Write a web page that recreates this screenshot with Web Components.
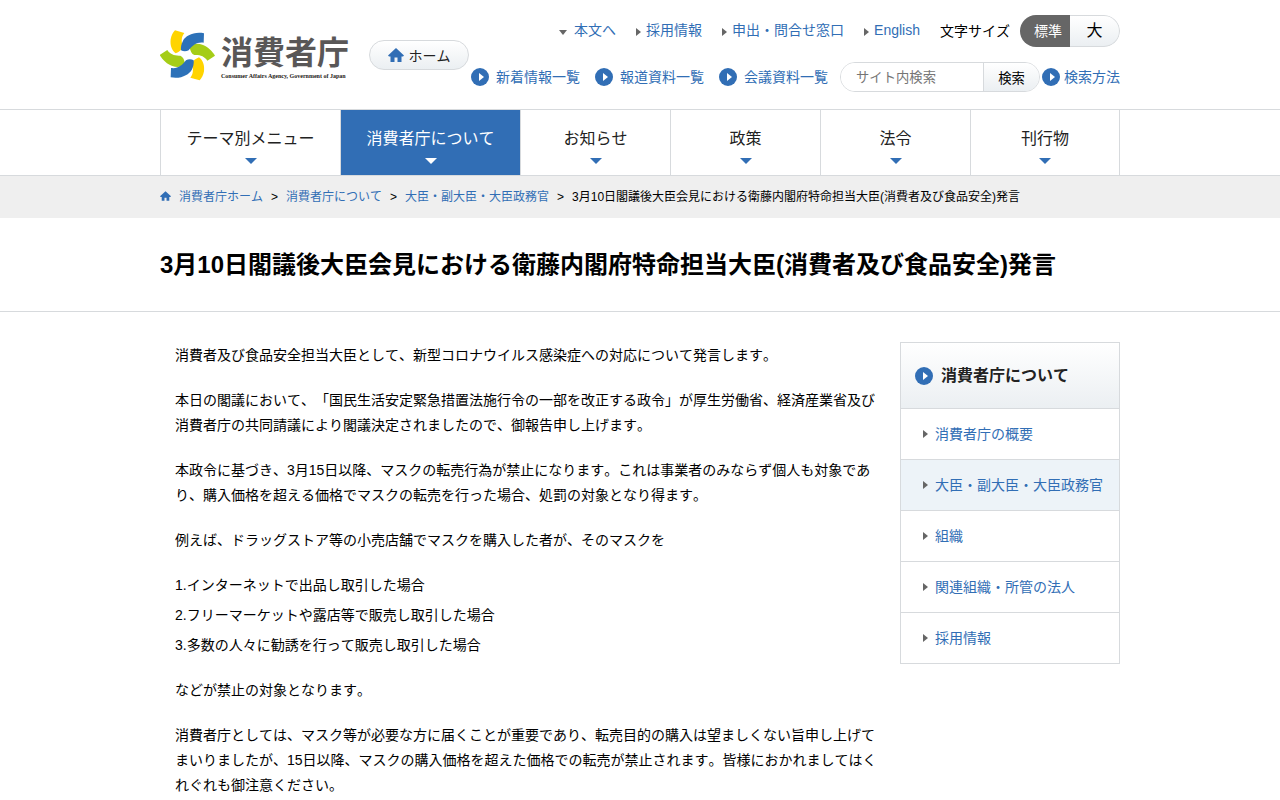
<!DOCTYPE html>
<html lang="ja">
<head>
<meta charset="utf-8">
<meta name="viewport" content="width=device-width, initial-scale=1">
<title>3月10日閣議後大臣会見における衛藤内閣府特命担当大臣(消費者及び食品安全)発言 | 消費者庁</title>
<style>
:root { --blue: #316eb5; --line: #d7dadd; --soft: linear-gradient(#fff, #ebeff2); --dark: #222; --mark: #666; }
body { margin: 0; background: #fff; color: #000; font: 14px/25px "Liberation Sans", "Noto Sans CJK JP", sans-serif; font-kerning: none; text-spacing-trim: space-all; }
</style>
</head>
<body>
<site-header></site-header>
<site-nav></site-nav>
<site-breadcrumb></site-breadcrumb>
<page-title>3月10日閣議後大臣会見における衛藤内閣府特命担当大臣(消費者及び食品安全)発言</page-title>
<page-columns>
  <statement-text></statement-text>
  <side-menu slot="side">
    <span slot="heading">消費者庁について</span>
    <side-item>消費者庁の概要</side-item>
    <side-item current>大臣・副大臣・大臣政務官</side-item>
    <side-item>組織</side-item>
    <side-item>関連組織・所管の法人</side-item>
    <side-item>採用情報</side-item>
  </side-menu>
</page-columns>

<script>
function define(name, html) {
  const template = document.createElement('template');
  template.innerHTML = html;
  customElements.define(name, class extends HTMLElement {
    constructor() {
      super();
      this.attachShadow({ mode: 'open' }).append(template.content.cloneNode(true));
    }
  });
}

const HOME = '<svg viewBox="0 0 32 28" aria-hidden="true"><path fill="#316eb5" d="M16 0 32 15 30 17H27V28H19V19H13V28H5V17H2L0 15Z"/></svg>';

define('play-icon', `
<style>:host{display:block;flex:none;width:18px;height:18px}svg{display:block}</style>
<svg width="18" height="18" viewBox="0 0 18 18" aria-hidden="true"><circle cx="9" cy="9" r="9" fill="#316eb5"/><path d="M8 5v8l5-4z" fill="#fff"/></svg>`);

define('arrow-link', `
<style>
:host{display:block;white-space:nowrap}
a{display:flex;align-items:center;gap:5px;padding-bottom:2px;color:var(--blue);text-decoration:none;line-height:20px}
i{width:0;height:0;margin-top:4px;border:4px solid transparent;border-left:5px solid var(--mark);border-right:0}
:host([down]) a{gap:7px}
:host([down]) i{border:4px solid transparent;border-top:5px solid var(--mark);border-bottom:0}
</style><a href="#"><i></i><slot></slot></a>`);

define('play-link', `
<style>
:host{display:block;white-space:nowrap}
a{display:flex;align-items:center;gap:var(--icon-gap,7px);color:var(--blue);text-decoration:none;line-height:20px}
</style><a href="#"><play-icon></play-icon><slot></slot></a>`);

define('site-logo', `
<style>
:host{display:block}
a{display:flex;align-items:center;gap:6px;color:#595757;text-decoration:none;white-space:nowrap}
svg{display:block;width:55px;height:51px}
span{display:block}
.ja{width:127px;padding-top:4px;font-size:32px;line-height:36px;font-weight:bold}
.en{font:bold 6px/10px "Liberation Serif",serif;color:#231815}
</style>
<a href="#"><svg viewBox="15 16 165 153" aria-hidden="true">
<defs>
<path id="y" d="M60 17L88 25C79 36 78 50 84 66C80 76 72 82 62 86C49 76 45 60 47 44C49 32 54 24 60 17Z"/>
<path id="b" d="M84 48C92 34 116 20 147 26L146 54C126 51 112 62 101 77C94 81 85 81 78 77C77 66 79 58 84 48Z"/>
<path id="g" d="M104 64C116 56 130 56 142 60C157 64 173 80 180 93L157 108C149 95 135 90 118 91C110 88 105 79 104 64Z"/>
</defs>
<use href="#y" fill="#ffd400"/><use href="#g" fill="#a5cd17"/><use href="#b" fill="#2c71b8"/>
<g transform="rotate(180 97 92)"><use href="#y" fill="#ffd400"/><use href="#g" fill="#a5cd17"/><use href="#b" fill="#2c71b8"/></g>
</svg><span><span class="ja">消費者庁</span><span class="en">Consumer Affairs Agency, Government of Japan</span></span></a>`);

define('site-search', `
<style>
:host{display:block;width:200px}
form{display:flex;box-sizing:border-box;height:30px;border:1px solid var(--line);border-radius:15px;overflow:hidden}
input,button{font-family:inherit;border:0}
input{flex:1;min-width:0;box-sizing:border-box;padding:0 0 0 15px;outline:0;background:#fff}
input::placeholder{color:#757575}
button{width:56px;padding:0;border-left:1px solid var(--line);background:var(--soft);color:#000}
</style>
<form role="search"><input type="text" aria-label="サイト内検索" placeholder="サイト内検索"><button type="button">検索</button></form>`);

define('size-switch', `
<style>
:host{display:flex;align-items:center;gap:10px;line-height:20px;white-space:nowrap}
div{display:grid;grid-template-columns:1fr 1fr;width:100px;height:32px;border-radius:16px;overflow:hidden}
button{min-width:0;padding:0;font:inherit;border:0}
.on{padding-left:6px;background:#666;color:#fff}
.big{border:1px solid var(--line);border-left:0;border-radius:0 16px 16px 0;background:var(--soft);font-size:16px;color:#000}
</style>
<span>文字サイズ</span><div role="group" aria-label="文字サイズ"><button class="on" type="button" aria-pressed="true">標準</button><button class="big" type="button" aria-pressed="false">大</button></div>`);

define('site-header', `
<style>
:host{display:block;border-bottom:1px solid var(--line)}
header{display:flex;justify-content:space-between;max-width:960px;margin:0 auto;padding:15px 0 17px}
.brand{display:flex;gap:21px;padding-top:15px}
.home{display:flex;align-items:center;justify-content:center;gap:5px;box-sizing:border-box;width:100px;height:30px;margin-top:10px;border:1px solid var(--line);border-radius:15px;background:var(--soft);color:var(--dark);text-decoration:none}
.home svg{width:16px;height:14px}
.home span{line-height:20px;padding-top:2px}
.tools{display:flex;flex-direction:column;align-items:flex-end;gap:15px}
.row{display:flex;align-items:center;height:32px;gap:20px}
.low{height:30px;gap:15px}
.find{display:flex;align-items:center;gap:2px;margin-left:-3px;--icon-gap:4px}
</style>
<header>
<div class="brand"><site-logo></site-logo><a class="home" href="#">${HOME}<span>ホーム</span></a></div>
<div class="tools">
<div class="row"><arrow-link down>本文へ</arrow-link><arrow-link>採用情報</arrow-link><arrow-link>申出・問合せ窓口</arrow-link><arrow-link>English</arrow-link><size-switch></size-switch></div>
<div class="row low"><play-link>新着情報一覧</play-link><play-link>報道資料一覧</play-link><play-link>会議資料一覧</play-link><div class="find"><site-search></site-search><play-link>検索方法</play-link></div></div>
</div>
</header>`);

define('nav-item', `
<style>
:host{display:block;border-left:1px solid var(--line)}
:host(:last-of-type){border-right:1px solid var(--line)}
a{display:flex;flex-direction:column;align-items:center;gap:7px;padding:17px 0 11px;color:var(--dark);font-size:16px;line-height:24px;text-decoration:none;white-space:nowrap}
i{width:0;height:0;border:6px solid transparent;border-top-color:var(--blue);border-bottom:0}
:host([current]) a{background:var(--blue);color:#fff}
:host([current]) i{border-top-color:#fff}
</style><a href="#"><slot></slot><i></i></a>`);

define('site-nav', `
<style>
:host{display:block;border-bottom:1px solid var(--line)}
nav{display:grid;grid-template-columns:6fr 6fr 5fr 5fr 5fr 5fr;max-width:960px;margin:0 auto}
</style>
<nav><nav-item>テーマ別メニュー</nav-item><nav-item current>消費者庁について</nav-item><nav-item>お知らせ</nav-item><nav-item>政策</nav-item><nav-item>法令</nav-item><nav-item>刊行物</nav-item></nav>`);

define('site-breadcrumb', `
<style>
:host{display:block;background:#efefef;font-size:12px;line-height:18px}
nav{display:flex;align-items:center;gap:8px;max-width:960px;margin:0 auto;padding:12px 0;white-space:nowrap}
svg{display:block;width:11px;height:10px;padding-bottom:2px}
a{color:var(--blue);text-decoration:none}
</style>
<nav aria-label="パンくず">${HOME}<a href="#">消費者庁ホーム</a><span>&gt;</span><a href="#">消費者庁について</a><span>&gt;</span><a href="#">大臣・副大臣・大臣政務官</a><span>&gt;</span><span>3月10日閣議後大臣会見における衛藤内閣府特命担当大臣(消費者及び食品安全)発言</span></nav>`);

define('page-title', `
<style>
:host{display:block;border-bottom:1px solid var(--line)}
h1{max-width:960px;margin:0 auto;padding:29px 0 28px;font-size:24px;line-height:36px}
</style><h1><slot></slot></h1>`);

define('page-columns', `
<style>
:host{display:flex;align-items:flex-start;max-width:960px;margin:0 auto;padding:30px 0}
main{flex:1;min-width:0;padding:1px 20px 0 15px}
aside{flex:none;width:220px}
</style><main><slot></slot></main><aside><slot name="side"></slot></aside>`);

define('statement-text', `
<style>
:host{display:block}
p,ul{margin:0 0 20px;padding:0}
ul{list-style:none}
li{margin-bottom:5px}
</style>
<p>消費者及び食品安全担当大臣として、新型コロナウイルス感染症への対応について発言します。</p>
<p>本日の閣議において、「国民生活安定緊急措置法施行令の一部を改正する政令」が厚生労働省、経済産業省及び消費者庁の共同請議により閣議決定されましたので、御報告申し上げます。</p>
<p>本政令に基づき、3月15日以降、マスクの転売行為が禁止になります。これは事業者のみならず個人も対象であり、購入価格を超える価格でマスクの転売を行った場合、処罰の対象となり得ます。</p>
<p>例えば、ドラッグストア等の小売店舗でマスクを購入した者が、そのマスクを</p>
<ul><li>1.インターネットで出品し取引した場合</li><li>2.フリーマーケットや露店等で販売し取引した場合</li><li>3.多数の人々に勧誘を行って販売し取引した場合</li></ul>
<p>などが禁止の対象となります。</p>
<p>消費者庁としては、マスク等が必要な方に届くことが重要であり、転売目的の購入は望ましくない旨申し上げてまいりましたが、15日以降、マスクの購入価格を超えた価格での転売が禁止されます。皆様におかれましてはくれぐれも御注意ください。</p>`);

define('side-menu', `
<style>
:host{display:block;border:1px solid var(--line)}
h2{display:flex;align-items:center;gap:8px;margin:0;padding:20px 14px;background:var(--soft);color:var(--dark);font-size:16px;line-height:25px}
</style><h2><play-icon></play-icon><slot name="heading"></slot></h2><nav><slot></slot></nav>`);

define('side-item', `
<style>
:host{display:block;border-top:1px solid var(--line)}
:host([current]){background:#edf3f8}
a{display:flex;align-items:center;gap:7px;padding:15px 0 15px 22px;color:var(--blue);line-height:20px;text-decoration:none;white-space:nowrap}
i{width:0;height:0;border:4px solid transparent;border-left:5px solid var(--mark);border-right:0}
</style><a href="#"><i></i><slot></slot></a>`);
</script>
</body>
</html>
